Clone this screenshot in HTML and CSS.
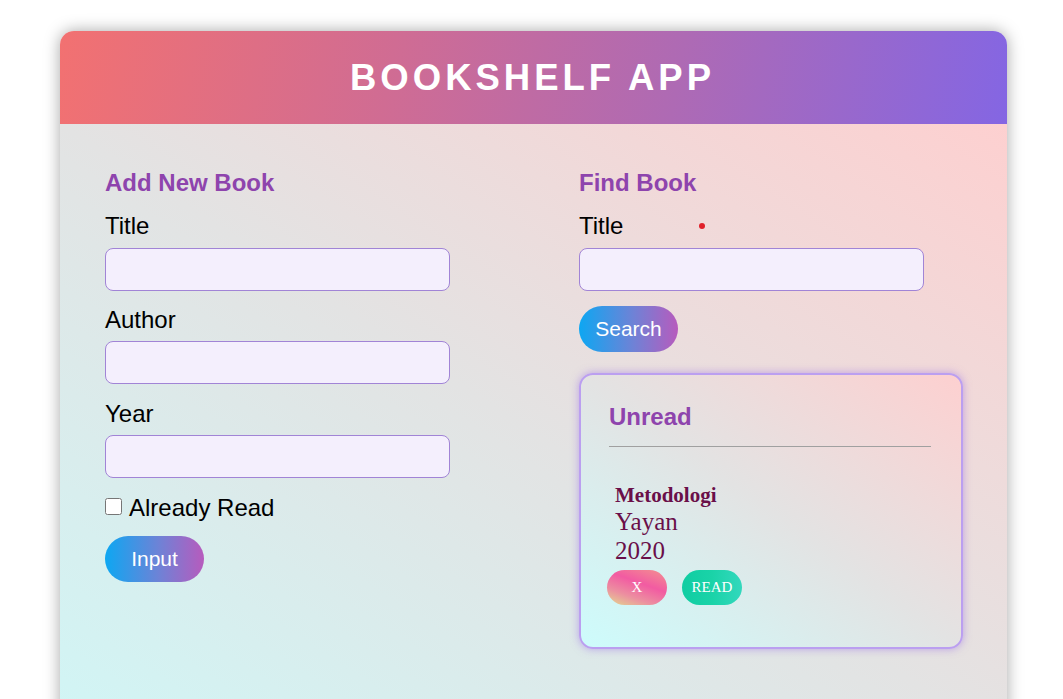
FILE: index.html
```html
<!DOCTYPE html>
<html lang="en">
<head>
<meta charset="utf-8">
<title>Bookshelf App</title>
<link rel="stylesheet" href="styles.css">
</head>
<body>
<div class="app">
  <header class="app-header">
    <h1 class="app-title">BOOKSHELF APP</h1>
  </header>
  <main class="app-main">
    <section class="col">
      <h2 class="section-title">Add New Book</h2>
      <label class="field-label" for="title">Title</label>
      <input class="field-input" id="title" type="text">
      <label class="field-label field-gap" for="author">Author</label>
      <input class="field-input" id="author" type="text">
      <label class="field-label field-gap field-gap-last" for="year">Year</label>
      <input class="field-input" id="year" type="text">
      <label class="check-row"><input class="check-box" type="checkbox"> Already Read</label>
      <button class="grad-btn">Input</button>
    </section>
    <section class="col">
      <h2 class="section-title">Find Book</h2>
      <label class="field-label" for="search">Title<span class="dot"></span></label>
      <input class="field-input" id="search" type="text">
      <button class="grad-btn search-btn">Search</button>
      <div class="shelf">
        <h2 class="section-title">Unread</h2>
        <hr class="shelf-rule">
        <article class="book">
          <h3 class="book-title">Metodologi</h3>
          <p class="book-line">Yayan</p>
          <p class="book-line">2020</p>
          <div class="book-actions">
            <button class="pill pill-del">X</button>
            <button class="pill pill-read">READ</button>
          </div>
        </article>
      </div>
    </section>
  </main>
</div>
</body>
</html>
```
FILE: styles.css
```css
* { box-sizing: border-box; }
html, body { margin: 0; padding: 0; background: #ffffff; }
body {
  font-family: "Liberation Sans", Arial, sans-serif;
  padding: 31px 0 0 60px;
  overflow: hidden;
  height: 699px;
}
.app {
  width: 947px;
  border-radius: 14px 14px 0 0;
  overflow: hidden;
  box-shadow: 0 0 16px rgba(0,0,0,0.35);
}
.app-header {
  height: 93px;
  display: flex;
  align-items: center;
  justify-content: center;
  background: linear-gradient(100deg, #f27171 0%, #d06c93 35%, #ae6ab4 65%, #8466e3 100%);
}
.app-title {
  margin: 0;
  color: #ffffff;
  font-size: 36.5px;
  font-weight: bold;
  letter-spacing: 4px;
  padding-right: 2px;
}
.app-main {
  display: grid;
  grid-template-columns: 384px 384px;
  column-gap: 90px;
  padding: 44px 44px 60px 45px;
  min-height: 620px;
  background: linear-gradient(to top right, #d0f6f6 0%, #e3e3e3 50%, #fdd0d0 100%);
}
.col { display: flex; flex-direction: column; align-items: flex-start; }
.section-title {
  margin: 0;
  font-size: 24px;
  line-height: 28px;
  font-weight: bold;
  color: #8e44ad;
}
.col > .section-title { margin-top: 1px; }
.field-label {
  display: flex;
  align-items: center;
  margin: 15px 0 8px;
  font-size: 24px;
  line-height: 28px;
  color: #000;
}
.field-gap { margin-top: 15px; margin-bottom: 7px; }
.field-gap-last { margin-top: 16px; }
.dot {
  width: 6px;
  height: 6px;
  border-radius: 50%;
  background: #e0202a;
  margin-left: 76px;
}
.field-input {
  width: 345px;
  height: 43px;
  border: 1px solid #a184d6;
  border-radius: 8px;
  background: #f4effd;
  font-size: 18px;
  padding: 0 10px;
}
.check-row {
  display: flex;
  align-items: center;
  margin-top: 16px;
  font-size: 24px;
  line-height: 28px;
}
.check-box {
  width: 17px;
  height: 17px;
  margin: 0 7px 4px 0;
}
.grad-btn {
  margin-top: 14px;
  width: 99px;
  height: 46px;
  border: none;
  border-radius: 23px;
  color: #ffffff;
  font-family: "Liberation Sans", Arial, sans-serif;
  font-size: 21px;
  background: linear-gradient(to right, #0da7f2 0%, #6f82d6 55%, #b75bbd 100%);
}
.search-btn { margin-top: 15px; }
.shelf {
  margin-top: 21px;
  width: 384px;
  border: 2px solid #bb9ff0;
  border-radius: 14px;
  padding: 28px 30px 42px 28px;
  box-shadow: 0 0 8px rgba(150, 105, 230, 0.55);
  background: linear-gradient(to top right, #cdfcfc 0%, #e3e3e3 50%, #fdd0d0 100%);
}
.shelf-rule {
  margin: 15px 0 0;
  border: none;
  border-top: 1px solid #a0a0a0;
  height: 0;
}
.book {
  margin-top: 36px;
  font-family: "Liberation Serif", "Times New Roman", serif;
  color: #6a0f49;
}
.book-title {
  margin: 0;
  padding-left: 6px;
  font-size: 21px;
  line-height: 24px;
  font-weight: bold;
}
.book-line {
  margin: 0;
  padding-left: 6px;
  font-size: 25px;
  line-height: 29px;
}
.book-actions {
  display: flex;
  gap: 15px;
  margin-top: 5px;
  margin-left: -2px;
}
.pill {
  width: 60px;
  height: 35px;
  border: none;
  border-radius: 18px;
  color: #ffffff;
  font-family: "Liberation Serif", "Times New Roman", serif;
  font-size: 15px;
}
.pill-del {
  background: linear-gradient(200deg, #f3928f 0%, #f25ba2 40%, #ec8fa0 70%, #e3d98e 100%);
}
.pill-read {
  background: linear-gradient(to right, #10cda2 0%, #1ad3a8 50%, #33d8bd 100%);
}
```
